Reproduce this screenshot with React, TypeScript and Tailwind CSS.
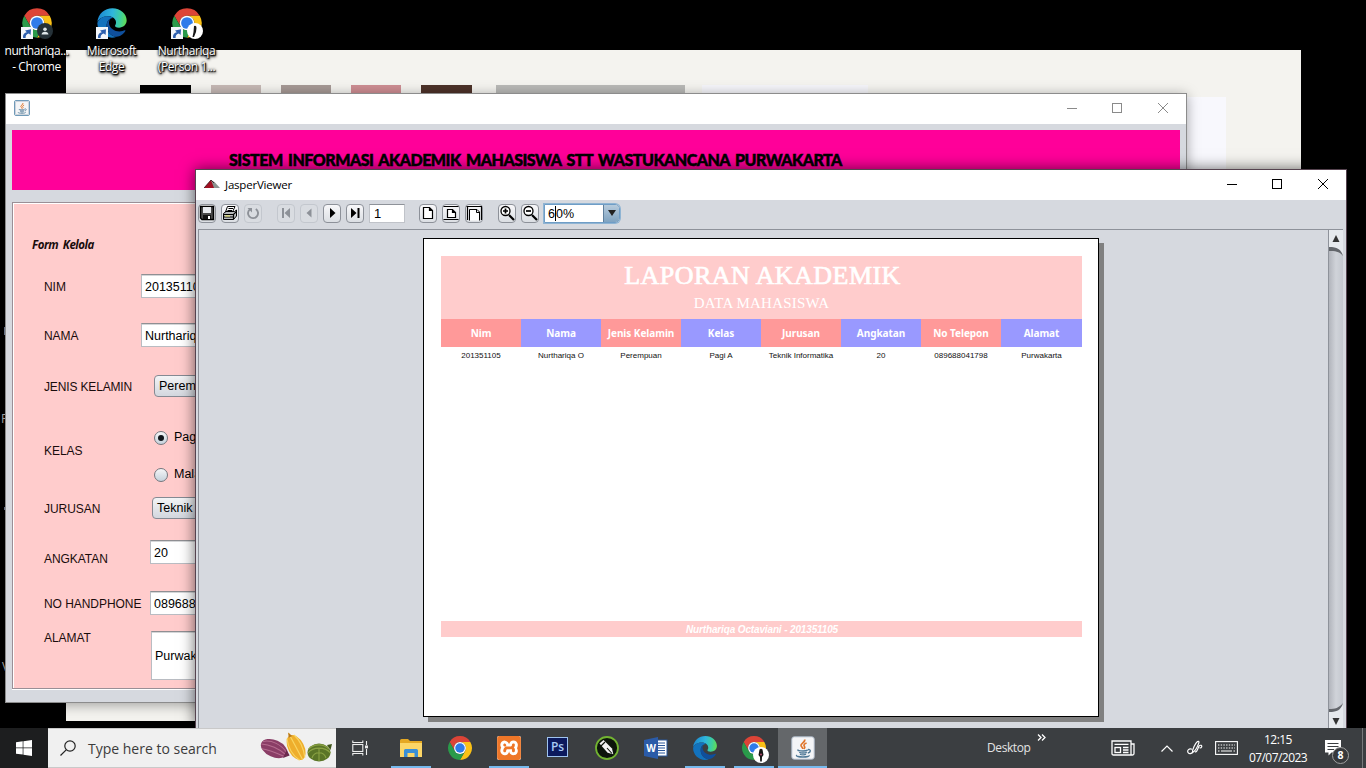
import React from "react";
import { SiXampp } from "react-icons/si";

const ui = "font-['Open_Sans','Noto_Sans',sans-serif]";
const arial = "font-['Liberation_Sans',Arial,sans-serif]";

function Chrome({ className }: { className: string }) {
  return (
    <svg viewBox="0 0 24 24" className={className}>
      <path fill="#dc4437" d="M12 6.5H21.53A11 11 0 0 0 2.47 6.5L7.24 14.75A5.5 5.5 0 0 1 12 6.5z" />
      <path fill="#fbc116" d="M21.53 6.5A11 11 0 0 1 12 23L16.76 14.75A5.5 5.5 0 0 0 12 6.5z" />
      <path fill="#2a9a4a" d="M12 23A11 11 0 0 1 2.47 6.5L7.24 14.75A5.5 5.5 0 0 0 16.76 14.75z" />
      <circle cx="12" cy="12" r="5.5" fill="#fff" />
      <circle cx="12" cy="12" r="4.4" fill="#2f7bea" />
    </svg>
  );
}

function Edge({ className, id }: { className: string; id: string }) {
  return (
    <svg viewBox="0 0 24 24" className={className}>
      <defs>
        <linearGradient id={id} x1="0" y1="0.4" x2="1" y2="0.5">
          <stop offset="0" stopColor="#1b86d0" />
          <stop offset="0.5" stopColor="#2fb6dd" />
          <stop offset="0.8" stopColor="#3fd09a" />
          <stop offset="1" stopColor="#62dc55" />
        </linearGradient>
      </defs>
      <path fill={`url(#${id})`} d="M1 11.5C1.5 5 6.5 1 12.3 1C18.5 1 23 5.5 23 10C23 13.5 20.3 15.5 17.3 15.5C15 15.5 14 14.6 14.3 13.9C14.8 13 15 12.6 15 11.6C15 9 12.5 7 9 7C4.5 7 1.8 9.5 1 11.5z" />
      <path fill="#1272bd" d="M1 12C2 9 5 7 9 7C10.5 7 12 7.5 12.8 8.2C9.5 8.5 8 11 8 14C8 18 11 22 15.5 22.3C14.5 22.7 13.3 23 12 23C6 23 1 18 1 12z" />
      <path fill="#0f4f9c" d="M8 14C8 11.3 9.3 9.3 11.4 8.5C9.9 9.8 9.6 11 9.8 12.5C10.3 16 14 18.3 17.5 18.3C19.3 18.3 20.8 17.6 21.5 17.4C22 17.3 22.2 17.7 22 18C20.5 20.5 18 22.3 15.5 22.3C11 22 8 18 8 14z" />
    </svg>
  );
}

function Java({ className }: { className: string }) {
  return (
    <svg viewBox="0 0 24 24" className={className} fill="none">
      <rect x="0.75" y="0.75" width="22.5" height="22.5" rx="2.5" fill="#f4f5f7" stroke="#a9b4c2" strokeWidth="1" />
      <path d="M13.6 3.5C14.8 6 9.3 7.4 10 9.6C10.3 10.8 12 11.6 11.8 13M15.6 7C12.6 8 12.6 9.4 13.5 10.5C14.2 11.4 13.6 12.2 13 12.8" stroke="#e0762d" strokeWidth="1.7" />
      <path d="M7.4 13.7C5.8 14.6 9 15 12 15C14.4 15 16 14.6 16.6 14M8.3 16.2C9.6 17.4 14.4 17.2 15.8 16.3M9 18.2C10.4 19.2 14 19 15 18.3M5.8 19C4.4 20.4 8 21 12 21C16 21 19 20.2 17.8 19.2M16.8 13.7C20.2 12.8 20 16.4 16.8 17" stroke="#4e7896" strokeWidth="1.4" />
    </svg>
  );
}

function Shortcut() {
  return (
    <svg viewBox="0 0 12 12" className="absolute bottom-0 left-0 size-3">
      <rect width="12" height="12" fill="#f3f6fa" />
      <path d="M2.2 11C1.6 8 3 5.6 5.8 5.2L4 3.4L10 2.2L9.6 8L7.9 6.6C5.6 7 4.4 8.4 4.6 11z" fill="#2d5fae" />
    </svg>
  );
}

function DesktopIcon({ lines, children }: { lines: string[]; children: React.ReactNode }) {
  return (
    <div className="flex w-[75px] flex-col items-center">
      <div className="relative size-8">
        {children}
        <Shortcut />
      </div>
      <div className={`${ui} mt-1 text-center text-[12px] leading-4 tracking-[-0.4px] whitespace-nowrap text-white [text-shadow:0_1px_2px_#000,1px_1px_1px_#000,0_0_3px_#000,1px_2px_3px_#000]`}>
        {lines.map((l) => (
          <div key={l}>{l}</div>
        ))}
      </div>
    </div>
  );
}

function Controls({ className }: { className: string }) {
  return (
    <svg viewBox="0 0 104 12" className={`mb-[2px] h-3 w-[104px] ${className}`} fill="none" stroke="currentColor" strokeWidth="1">
      <path d="M1 6.5H11" />
      <rect x="46.5" y="1.5" width="9" height="9" />
      <path d="M92 1L102 11M102 1L92 11" />
    </svg>
  );
}

const label = "w-[107px] shrink-0 pl-[30px] text-[12px] tracking-[-0.05px] whitespace-nowrap text-[#1a0c0c]";
const field = "flex shrink-0 items-center w-[120px] border border-[#b9bcc2] border-t-[#8f8f93] bg-white pt-[2px] pl-[3px] text-[12.5px] text-black shadow-[inset_0_1px_0_#d5d6d8]";
const combo = "flex h-[22px] w-[120px] shrink-0 items-center rounded-[4px] border border-[#858a93] bg-linear-to-b from-[#f3f4f6] to-[#d3d7de] pt-px pl-1 text-[12.5px] text-black";

function Radio({ on, text }: { on?: boolean; text: string }) {
  return (
    <div className="flex h-[37px] items-center gap-[6px] text-[12.5px]">
      <div className="flex size-[14px] items-center justify-center rounded-full border border-[#73777e] bg-linear-to-b from-[#f5f6f8] to-[#c6d2dc]">
        {on && <div className="size-[6px] rounded-full bg-[#10151b]" />}
      </div>
      {text}
    </div>
  );
}

function FormWindow() {
  return (
    <div className="absolute top-[93px] left-[5px] flex h-[610px] w-[1182px] flex-col border border-[#8c8c8c] bg-[#d6d9df] shadow-[0_2px_12px_rgba(0,0,0,0.35)]">
      <div className="flex h-[30px] shrink-0 items-center justify-between bg-white pr-[16px] pl-[8px]">
        <div className="mb-[2px] size-4 rounded-[2px] border border-[#6f9ab8]">
          <Java className="size-[14px]" />
        </div>
        <Controls className="text-[#8a8a8a]" />
      </div>
      <div className="mx-[6px] mt-[6px] h-[60px] shrink-0 bg-[#ff0099] pt-[20px] pl-[217px] font-['Lato',sans-serif] text-[16px] leading-5 font-black tracking-[-0.49px] [word-spacing:2.2px] whitespace-nowrap text-black [-webkit-text-stroke:0.5px_#000]">
        SISTEM INFORMASI AKADEMIK MAHASISWA STT WASTUKANCANA PURWAKARTA
      </div>
      <div className={`${arial} mx-[6px] mt-[12px] flex h-[487px] flex-col border border-[#9a8f96] bg-[#ffcccc] shadow-[inset_1px_1px_0_#fff,0_1px_0_#fff]`}>
        <div className="flex h-[59px] items-center pt-[24px] pl-[19px] text-[11.5px] font-bold text-[#1a0c0c] italic font-['Open_Sans',sans-serif] tracking-[-0.45px] [word-spacing:2px]">Form Kelola</div>
        <div className="flex h-[49px] items-center pl-px">
          <div className={label}>NIM</div>
          <div className="w-[20px]" />
          <div className={`${field} mb-px h-6`}>201351105</div>
        </div>
        <div className="flex h-[49px] items-center pl-px">
          <div className={label}>NAMA</div>
          <div className="w-[20px]" />
          <div className={`${field} mb-px h-6`}>Nurthariqa O</div>
        </div>
        <div className="flex h-[52px] items-center pt-px pl-px">
          <div className={`${label} tracking-[-0.15px]`}>JENIS KELAMIN</div>
          <div className="w-[33px]" />
          <div className={`${combo} mb-px`}>Perempuan</div>
        </div>
        <div className="flex h-[78px] items-center pl-px">
          <div className={label}>KELAS</div>
          <div className="w-[33px]" />
          <div className="flex flex-col pt-[10px]">
            <Radio on text="Pagi" />
            <Radio text="Malam" />
          </div>
        </div>
        <div className="flex h-[37px] items-center pl-px">
          <div className={label}>JURUSAN</div>
          <div className="w-[31px]" />
          <div className={`${combo} mb-px`}>Teknik Informatika</div>
        </div>
        <div className="flex h-[51px] items-center pl-px">
          <div className={`${label} pt-3`}>ANGKATAN</div>
          <div className="w-[29px]" />
          <div className={`${field} mb-px h-6`}>20</div>
        </div>
        <div className="flex h-[51px] items-center pl-px">
          <div className={label}>NO HANDPHONE</div>
          <div className="w-[29px]" />
          <div className={`${field} mb-px h-6`}>089688041798</div>
        </div>
        <div className="flex items-start pt-[2px] pl-px">
          <div className={`${label} -mt-[2px]`}>ALAMAT</div>
          <div className="w-[30px]" />
          <div className={`${field} h-[49px]`}>Purwakarta</div>
        </div>
      </div>
    </div>
  );
}

function ToolButton({ off, children }: { off?: boolean; children: React.ReactNode }) {
  return (
    <div
      className={
        off
          ? "flex h-[19px] w-[18px] shrink-0 items-center justify-center rounded-[4px] border border-[#c3c7ce] bg-[#d9dce1] text-[#8d9198]"
          : "flex h-[19px] w-[18px] shrink-0 items-center justify-center rounded-[4px] border border-[#8d9199] bg-linear-to-b from-[#f8f8fa] to-[#dbdee3] text-black"
      }
    >
      <svg viewBox="0 0 16 16" className="size-4 shrink-0" fill="none" stroke="currentColor" strokeWidth="1">
        {children}
      </svg>
    </div>
  );
}

function Toolbar() {
  return (
    <div className="flex h-[29px] shrink-0 items-center bg-[#d6d9df] pb-[3px] pl-[2px]">
      <div className="flex gap-[5px]">
        <ToolButton>
          <path d="M1.5 1.5H14.5V14.5H3L1.5 13z" fill="#4a4a4a" strokeWidth="1.4" />
          <rect x="4" y="2" width="8" height="6" fill="#e8eaee" stroke="none" />
          <path d="M4 10H12V14H4z" fill="#111" stroke="none" />
          <rect x="9" y="11" width="2" height="3" fill="#fff" stroke="none" />
        </ToolButton>
        <ToolButton>
          <path d="M5.5 1.5H13L10.5 7H3.5z" fill="#fff" />
          <path d="M6.5 3.5H11M5.5 5.5H10" />
          <path d="M1.5 8.5L4 6.5H12.5L14.5 5V11L11.5 14.5H1.5z" fill="#b9bbbd" />
          <path d="M1.5 9.5H11.5L14.5 6.5M11.5 9.5V14.5M1.5 12H11.5" strokeWidth="1.2" />
          <path d="M3 11H8" stroke="#f2ee6a" />
        </ToolButton>
        <ToolButton off>
          <path d="M5 4.2A5 5 0 1 0 10.8 4" strokeWidth="1.9" />
          <path d="M2.5 3H7V7.5z" fill="currentColor" stroke="none" />
        </ToolButton>
      </div>
      <div className="ml-[15px] flex gap-[5px]">
        <ToolButton off>
          <path d="M4 3H6V13H4zM12 3V13L6.5 8z" fill="currentColor" stroke="none" />
        </ToolButton>
        <ToolButton off>
          <path d="M10.5 3.5V12.5L5.5 8z" fill="currentColor" stroke="none" />
        </ToolButton>
        <ToolButton>
          <path d="M6 3V13L11.5 8z" fill="currentColor" stroke="none" />
        </ToolButton>
        <ToolButton>
          <path d="M4 3V13L9.5 8zM10.5 3H12.5V13H10.5z" fill="currentColor" stroke="none" />
        </ToolButton>
      </div>
      <div className={`${arial} ml-[5px] flex h-[19px] w-[36px] shrink-0 items-center border border-[#c0c3c9] border-t-[#8e9299] bg-white pt-[2px] pl-1 text-[13px]`}>1</div>
      <div className="ml-[14px] flex gap-[5px]">
        <ToolButton>
          <path d="M3.5 2.5H9.5L12.5 5.5V13.5H3.5zM9.5 2.5V5.5H12.5" fill="#fff" strokeWidth="1.2" />
        </ToolButton>
        <ToolButton>
          <path d="M0.5 1.5H15.5M0.5 14.5H15.5" strokeWidth="1.2" />
          <path d="M4.5 4.5H9.5L12.5 7.5V12.5H4.5zM9.5 4.5V7.5H12.5" fill="#fff" strokeWidth="1.2" />
        </ToolButton>
        <ToolButton>
          <path d="M0.5 1.5H15.5V15M1.5 1.5V15" strokeWidth="1.2" />
          <path d="M3.5 15.5V4.5H11L13.5 7V15.5M10.5 4.5V7.5H13.5" fill="#fff" />
        </ToolButton>
      </div>
      <div className="ml-[15px] flex gap-[5px]">
        <ToolButton>
          <circle cx="6.5" cy="6" r="4.5" strokeWidth="1.3" fill="#fff" />
          <path d="M4 6H9M6.5 3.5V8.5" strokeWidth="1.7" />
          <path d="M10 10L15 15" strokeWidth="2.2" />
        </ToolButton>
        <ToolButton>
          <circle cx="6.5" cy="6" r="4.5" strokeWidth="1.3" fill="#fff" />
          <path d="M4 6H9" strokeWidth="1.7" />
          <path d="M10 10L15 15" strokeWidth="2.2" />
        </ToolButton>
      </div>
      <div className="ml-[5px] flex h-[19px] w-[76px] shrink-0 rounded-r-[5px] border border-[#6f9dc6] shadow-[0_0_0_1px_#8fb4d3]">
        <div className={`${arial} flex flex-1 items-center bg-white pt-[2px] pl-[3px] text-[12.5px]`}>
          6<span className="mb-[2px] h-[15px] w-px bg-black" />0%
        </div>
        <div className="flex w-4 items-center justify-center rounded-r-[4px] border-l border-[#5f7f9c] bg-linear-to-b from-[#b7cbdc] to-[#7fa3c1]">
          <svg viewBox="0 0 8 6" className="h-[6px] w-2">
            <path d="M0 0H8L4 6z" fill="#222" />
          </svg>
        </div>
      </div>
    </div>
  );
}

const columns: [string, string][] = [
  ["Nim", "201351105"],
  ["Nama", "Nurthariqa O"],
  ["Jenis Kelamin", "Perempuan"],
  ["Kelas", "Pagi A"],
  ["Jurusan", "Teknik Informatika"],
  ["Angkatan", "20"],
  ["No Telepon", "089688041798"],
  ["Alamat", "Purwakarta"],
];

function Report() {
  return (
    <div className="mt-[8px] ml-[224px] flex h-[479px] w-[676px] shrink-0 flex-col border border-black bg-white px-[17px] pt-[17px] shadow-[5px_5px_0_#808080]">
      <div className="flex h-[63px] w-[641px] shrink-0 flex-col items-center bg-[#ffcccc] pt-[3px] font-['Liberation_Serif',serif] whitespace-nowrap text-white">
        <div className="h-[34px] pl-[2px] text-[26px] leading-[34px] tracking-[0.45px] [-webkit-text-stroke:0.7px_#fff]">LAPORAN AKADEMIK</div>
        <div className="text-[15px] leading-5 tracking-[0.2px]">DATA MAHASISWA</div>
      </div>
      <div className="grid w-[641px] grid-cols-[repeat(7,80px)_1fr]">
        {columns.map(([h, v], i) => (
          <div key={h} className="min-w-0 text-center whitespace-nowrap">
            <div className={`h-7 font-['Noto_Sans',sans-serif] text-[10px] leading-7 font-bold tracking-[-0.05px] text-white ${i % 2 ? "bg-[#9999ff]" : "bg-[#ff9999]"}`}>{h}</div>
            <div className={`${arial} h-4 pt-px text-[8px] leading-4 text-[#111]`}>{v}</div>
          </div>
        ))}
      </div>
      <div className={`${arial} mt-[258px] h-4 w-[641px] bg-[#ffcccc] pt-px pl-px text-center text-[10px] leading-4 font-bold tracking-[-0.14px] text-white italic`}>Nurthariqa Octaviani - 201351105</div>
    </div>
  );
}

function Scrollbar() {
  return (
    <div className="ml-auto flex w-[15px] shrink-0 flex-col border-l border-[#8e929a] bg-linear-to-r from-[#b2b5bc] via-[#d0d3d9] to-[#c4c8cf]">
      <svg viewBox="0 0 14 36" className="h-9 w-[14px] shrink-0">
        <path d="M0 0H14V26C12 19 8 17 0 17z" fill="#e6e9ed" />
        <path d="M0 17C8 17 12 19 14 26C10 21 6 21 0 21z" fill="#63666b" />
        <path d="M3.5 12L7 5L10.5 12z" fill="#333" />
      </svg>
      <div className="flex-1" />
      <svg viewBox="0 0 14 36" className="h-9 w-[14px] shrink-0">
        <path d="M0 36H14V11C12 18 8 20 0 20z" fill="#e6e9ed" />
        <path d="M0 20C8 20 12 18 14 11C10 16 6 17 0 17z" fill="#63666b" />
        <path d="M3.5 26L7 33L10.5 26z" fill="#333" />
      </svg>
    </div>
  );
}

function JasperWindow() {
  return (
    <div className="absolute top-[169px] left-[195px] flex h-[559px] w-[1152px] flex-col border border-b-0 border-[#55434f] bg-[#d6d9df] shadow-[0_0_14px_rgba(0,0,0,0.6)]">
      <div className="flex h-[30px] shrink-0 items-center bg-white pr-[16px] pl-[8px]">
        <svg viewBox="0 0 16 8" className="mb-[2px] h-2 w-4">
          <path d="M0 8L7 0L12 8z" fill="#a11022" />
          <path d="M7 0L10.5 2L16 8H10z" fill="#8b9490" />
          <path d="M0 8L7 0L10 3" fill="none" stroke="#301018" strokeWidth="0.8" />
        </svg>
        <span className={`${ui} ml-[5px] flex-1 text-[11.5px] tracking-[-0.2px] text-black`}>JasperViewer</span>
        <Controls className="text-black" />
      </div>
      <Toolbar />
      <div className="mr-[3px] ml-[2px] flex min-h-0 flex-1 items-stretch border-t border-l border-[#8e929a]">
        <div className="flex items-start">
          <Report />
        </div>
        <Scrollbar />
      </div>
    </div>
  );
}

function Task({ open, active, children }: { open?: boolean; active?: boolean; children: React.ReactNode }) {
  return (
    <div className={`flex h-10 w-[49px] shrink-0 flex-col items-center ${active ? "bg-[#64676a]" : ""}`}>
      <div className="flex h-[38px] items-center pt-px">{children}</div>
      <div className={active ? "h-[2px] w-full bg-[#76b9ed]" : open ? "h-[2px] w-10 bg-[#76b9ed]" : "h-[2px]"} />
    </div>
  );
}

function CocoaPods() {
  return (
    <svg viewBox="0 0 76 36" className="h-9 w-[76px]">
      <g transform="rotate(24 16 19)">
        <ellipse cx="15" cy="19" rx="14" ry="8.5" fill="#8a3d66" />
        <path d="M2 17C9 12 20 12 29 18M1.5 20C9 17 20 17 29 20M4 24C12 22 20 22 27 22" stroke="#b56c8f" strokeWidth="1" fill="none" />
        <path d="M27 15L32 19L27 24z" fill="#6b2a4d" />
      </g>
      <g transform="rotate(-28 38 17)">
        <ellipse cx="37" cy="17" rx="8" ry="13.5" fill="#eeae2c" />
        <path d="M37 1V31M33 5C30 13 30 22 34 30M41 5C44 13 43 22 40 30" stroke="#f8d460" strokeWidth="1.2" fill="none" />
        <path d="M35 5L37 0L39 5z" fill="#b9791b" />
      </g>
      <g>
        <ellipse cx="60" cy="22.5" rx="11.5" ry="9" fill="#5b7527" />
        <path d="M49.5 19C56 13 65 14 70 19M49 23C54 16.5 66 16.5 71.5 23M53 28C55 21 65 21 67 28M60 18V31" stroke="#8ba344" strokeWidth="1.1" fill="none" />
        <path d="M68 15L73 14L71.5 20z" fill="#3f5519" />
      </g>
    </svg>
  );
}

function Taskbar() {
  return (
    <div className={`${ui} absolute bottom-0 left-0 flex h-10 w-full items-stretch bg-[#3b3e41] text-white`}>
      <div className="flex w-12 shrink-0 items-center justify-center bg-[#1d1e1f]">
        <svg viewBox="0 0 16 16" className="size-4" fill="#fff">
          <path d="M0 2.2L6.7 1.3V7.6H0zM7.4 1.2L16 0V7.6H7.4zM0 8.3H6.7V14.6L0 13.7zM7.4 8.3H16V16L7.4 14.7z" />
        </svg>
      </div>
      <div className="flex w-[288px] shrink-0 items-center border-y border-[#c9c9c9] bg-[#f0f0f0] pr-px pl-[12px]">
        <svg viewBox="0 0 16 16" className="size-4" fill="none" stroke="#222" strokeWidth="1.2">
          <circle cx="10" cy="6" r="5.2" />
          <path d="M6.2 9.8L0.5 15.5" />
        </svg>
        <span className="ml-[12px] flex-1 text-[14px] whitespace-nowrap text-[#3c3c3c]">Type here to search</span>
        <CocoaPods />
      </div>
      <div className="flex w-[50px] shrink-0 items-center justify-center pr-[2px]">
        <svg viewBox="0 0 16 16" className="size-4" fill="none" stroke="#eee" strokeWidth="1.1">
          <rect x="0.8" y="4.5" width="10" height="7" />
          <path d="M0.8 0.5V2.5H10.8V0.5M0.8 15.5V13.5H10.8V15.5M14.5 1V5M14.5 9V15" />
          <rect x="13.6" y="6" width="1.8" height="1.8" fill="#eee" />
        </svg>
      </div>
      <Task open>
        <svg viewBox="0 0 22 18" className="h-[18px] w-[22px]">
          <path d="M0 1.5Q0 0 1.5 0H8L10 2H22V18H0z" fill="#e5a823" />
          <path d="M0 4H22V18H0z" fill="#fcd667" />
          <path d="M4 18V11.5Q4 10 5.5 10H16.5Q18 10 18 11.5V18H14.5V14H7.5V18z" fill="#3a8fd6" />
        </svg>
      </Task>
      <Task><Chrome className="size-[26px]" /></Task>
      <Task open>
        <div className="flex size-6 items-center justify-center rounded-[2px] bg-white">
          <SiXampp className="size-6 text-[#ee7628]" />
        </div>
      </Task>
      <Task>
        <div className="mb-[2px] flex h-5 w-[21px] items-center justify-center border border-[#9fc4f0] bg-[#0c1a5e] text-[12px] font-semibold text-[#a9ccf5]">Ps</div>
      </Task>
      <Task>
        <svg viewBox="0 0 24 24" className="size-6">
          <circle cx="12" cy="12" r="11" fill="#0d150b" stroke="#72b431" strokeWidth="1.8" />
          <path d="M4.5 7.5L8.5 4L17 12.5L18.3 18.3L12.6 16.8z" fill="#f2f2f2" />
          <path d="M6 10L10 6M12 12L17 17.5" stroke="#0d150b" strokeWidth="1.1" />
        </svg>
      </Task>
      <Task>
        <svg viewBox="0 0 24 22" className="h-[22px] w-6">
          <rect x="12" y="3" width="11" height="16" fill="#fff" stroke="#2b579a" />
          <path d="M14 6H21M14 8.5H21M14 11H21M14 13.5H21M14 16H21" stroke="#2b579a" />
          <path d="M0 3L14 0V22L0 19z" fill="#2b5ba8" />
          <text x="7" y="14.5" fontSize="10" fontWeight="bold" textAnchor="middle" fill="#fff" fontFamily="Open Sans">W</text>
        </svg>
      </Task>
      <Task open><Edge id="edge-task" className="size-[26px]" /></Task>
      <Task open>
        <div className="relative">
          <Chrome className="size-[26px]" />
          <svg viewBox="0 0 16 16" className="absolute -right-[2px] -bottom-[2px] size-4">
            <circle cx="8" cy="8" r="8" fill="#fff" />
            <path d="M6.5 2.5Q8 1 9.5 2.5L10.5 8L9 10L8.8 14.5H7.2L7 10L5.5 8z" fill="#161616" />
            <circle cx="8" cy="7.5" r="1" fill="#b44a6c" />
          </svg>
        </div>
      </Task>
      <Task open active><Java className="size-6" /></Task>
      <div className="flex flex-1 items-center">
        <span className="ml-[160px] w-[44px] text-[12px] tracking-[-0.4px] text-[#e4e4e4]">Desktop</span>
        <svg viewBox="0 0 10 7" className="mb-[21px] ml-[6px] h-[7px] w-[10px]" fill="none" stroke="#fff" strokeWidth="1.3">
          <path d="M1 0.5L4 3.5L1 6.5M5 0.5L8 3.5L5 6.5" />
        </svg>
        <svg viewBox="0 0 24 16" className="ml-[64px] h-4 w-6" fill="none" stroke="#fff" strokeWidth="1.3">
          <path d="M1 1H20V15H2.5Q1 15 1 13.5zM20 4H23V13.5Q23 15 21.5 15H19" />
          <path d="M3.5 4.3H17.5M12 7.5H17.5M12 10H17.5M12 12.5H17.5" />
          <rect x="4" y="7.5" width="5.5" height="5" />
        </svg>
        <svg viewBox="0 0 12 7" className="ml-[26px] h-[7px] w-3" fill="none" stroke="#fff" strokeWidth="1.2">
          <path d="M0.5 6.5L6 1L11.5 6.5" />
        </svg>
        <svg viewBox="0 0 16 16" className="ml-[14px] size-4" fill="none" stroke="#fff" strokeWidth="1.2">
          <path d="M5 9.3C2 8 0 10.5 1 12.5C2 14.5 4.5 13.5 6 12" />
          <path d="M5.5 12.5C5 9.5 8.5 3 10.5 1.5C12 0.8 12.3 2 11.6 3.6C10.5 6.5 7.5 11.5 5.5 12.5z" />
          <path d="M8 11.5C9.5 13 10.5 9.5 12 6C13.5 4.5 15.5 5.5 14.5 7.2C14 8 13 8 12.5 7.6" />
        </svg>
        <svg viewBox="0 0 23 14" className="ml-[12px] h-[14px] w-[23px]" fill="none" stroke="#fff" strokeWidth="1.1">
          <rect x="0.6" y="0.6" width="21.8" height="12.8" />
          <path d="M3 4H20M3 7H20" strokeDasharray="1.4 1.3" />
          <path d="M3 10H4.5M6 10H17M18.5 10H20" />
        </svg>
        <div className="ml-[10px] flex w-[60px] flex-col items-center pt-[2px] text-[12px] leading-[18px] tracking-[-0.55px] whitespace-nowrap">
          <span>12:15</span>
          <span>07/07/2023</span>
        </div>
        <div className="relative ml-[17px]">
          <svg viewBox="0 0 16 16" className="size-4">
            <path d="M0 0H16V12.5H6.5L3.5 15.5V12.5H0z" fill="#fff" />
            <path d="M2.5 3.5H13.5M2.5 6.5H13.5M2.5 9.5H9" stroke="#3b3e41" strokeWidth="1.2" />
          </svg>
          <div className="absolute top-[7px] left-[7px] flex size-[17px] items-center justify-center rounded-full border border-[#a0a0a0] bg-[#37393c] text-[10.5px] font-bold">8</div>
        </div>
      </div>
      <div className="mr-[3px] w-px bg-[#77797b]" />
    </div>
  );
}

export default function App() {
  return (
    <div className="relative h-[768px] w-[1366px] overflow-hidden bg-black">
      <div className="absolute top-[50px] left-[66px] h-[671px] w-[1235px] bg-[#f4f3ef]">
        <div className="flex items-start pt-[35px] pl-[74px]">
          <div className="h-10 w-[51px] bg-black" />
          <div className="ml-[20px] h-10 w-[50px] bg-[#c5b8b4]" />
          <div className="ml-[20px] h-10 w-[50px] bg-[#a69995]" />
          <div className="ml-[20px] h-10 w-[50px] bg-[#cd8d92]" />
          <div className="ml-[20px] h-10 w-[51px] bg-[#4d3229]" />
          <div className="ml-[24px] h-10 w-[189px] bg-[#b9b9b7]" />
          <div className="ml-[17px] h-10 w-[166px] bg-[#f5f5fa]" />
          <div className="mt-[12px] ml-[258px] h-[200px] w-[100px] bg-[#f8f8fd]" />
        </div>
      </div>
      <div className="absolute top-[7px] left-[-1px] flex">
        <DesktopIcon lines={["nurthariqa...", "- Chrome"]}>
          <Chrome className="size-8" />
          <svg viewBox="0 0 16 16" className="absolute right-0 bottom-0 size-4">
            <circle cx="8" cy="8" r="8" fill="#253138" />
            <circle cx="8" cy="6.3" r="1.8" fill="#dfe7ea" />
            <path d="M4.5 11.5Q5 8.8 8 8.8T11.5 11.5z" fill="#dfe7ea" />
          </svg>
        </DesktopIcon>
        <DesktopIcon lines={["Microsoft", "Edge"]}>
          <Edge id="edge-desktop" className="size-8" />
        </DesktopIcon>
        <DesktopIcon lines={["Nurthariqa", "(Person 1..."]}>
          <Chrome className="size-8" />
          <svg viewBox="0 0 16 16" className="absolute right-0 bottom-0 size-4">
            <circle cx="8" cy="8" r="8" fill="#fff" />
            <path d="M7 3Q9.5 2 9.5 5L9 9L7 14H5.5L6.5 9z" fill="#161616" />
          </svg>
        </DesktopIcon>
      </div>
      <div className={`${ui} absolute top-[411px] left-[1px] text-[12px] leading-4 text-[#bbb]`}>F</div>
      <div className={`${ui} absolute top-[659px] left-[2px] text-[12px] leading-4 text-[#bbb]`}>V</div>
      <div className="absolute top-[327px] left-[4px] h-[8px] w-px bg-[#7a88a0]" />
      <div className="absolute top-[507px] left-[4px] h-[3px] w-px bg-[#7a88a0]" />
      <FormWindow />
      <JasperWindow />
      <Taskbar />
    </div>
  );
}
